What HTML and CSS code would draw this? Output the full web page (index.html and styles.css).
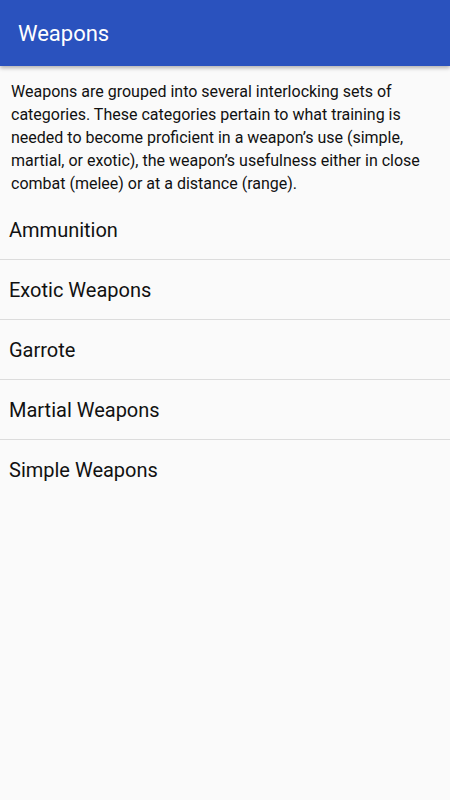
FILE: index.html
```html
<!DOCTYPE html>
<html>
<head>
<meta charset="utf-8">
<link rel="stylesheet" href="styles.css">
</head>
<body>
<header class="appbar"><h1 class="title">Weapons</h1></header>
<main class="content">
<p class="intro">Weapons are grouped into several interlocking sets of categories. These categories pertain to what training is needed to become proficient in a weapon’s use (simple, martial, or exotic), the weapon’s usefulness either in close combat (melee) or at a distance (range).</p>
<ul class="list">
<li class="item">Ammunition</li>
<li class="item">Exotic Weapons</li>
<li class="item">Garrote</li>
<li class="item">Martial Weapons</li>
<li class="item">Simple Weapons</li>
</ul>
</main>
</body>
</html>
```
FILE: styles.css
```css
html, body {
  margin: 0;
  padding: 0;
  background: #fafafa;
  font-family: Roboto, "Noto Sans", sans-serif;
}
body {
  width: 450px;
  height: 800px;
  overflow: hidden;
}
.appbar {
  height: 66px;
  background: #2a52be;
  display: flex;
  align-items: center;
  padding: 0 18px;
  box-shadow: 0 2px 4px rgba(0,0,0,0.3);
  position: relative;
  z-index: 1;
}
.title {
  margin: 0;
  color: #fff;
  font-size: 22px;
  font-weight: 400;
}
.content {
  display: flex;
  flex-direction: column;
}
.intro {
  margin: 0;
  padding: 14px 11px 5px 11px;
  font-size: 16px;
  line-height: 23px;
  color: #111;
}
.list {
  list-style: none;
  margin: 0;
  padding: 0;
}
.item {
  height: 59px;
  display: flex;
  align-items: center;
  padding-left: 9px;
  font-size: 20px;
  color: #111;
  border-bottom: 1px solid #dcdcdc;
}
.item:last-child {
  border-bottom: none;
}
```
